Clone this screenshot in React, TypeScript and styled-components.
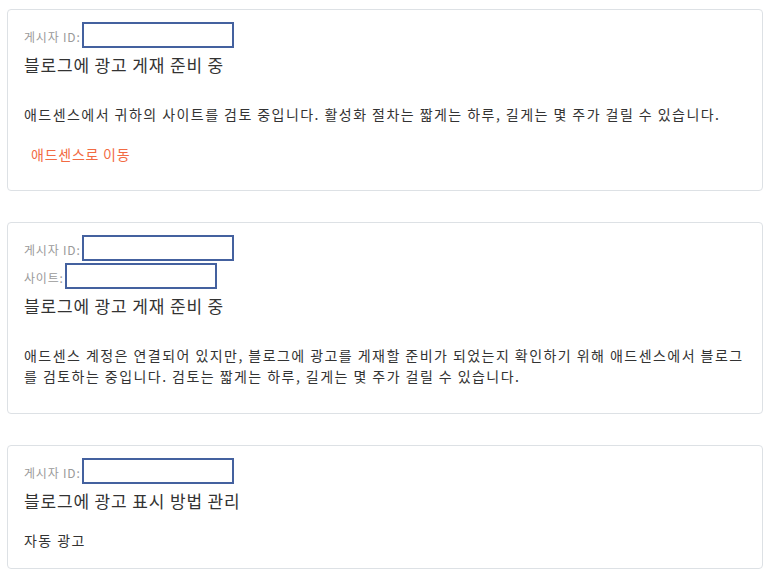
import React from 'react';
import styled, { createGlobalStyle } from 'styled-components';

const GlobalStyle = createGlobalStyle`
    body {
        margin: 0;
        background: #ffffff;
        font-family: 'Noto Sans CJK KR', 'Noto Sans', sans-serif;
        color: #333333;
    }
`;

const Page = styled.div`
    display: flex;
    flex-direction: column;
    gap: 31px;
    padding: 9px 10px 0 7px;
`;

const Card = styled.section<{ $bottom?: number }>`
    display: flex;
    flex-direction: column;
    border: 1px solid #dde1e5;
    border-radius: 4px;
    padding: 12px 16px ${props => props.$bottom ?? 26}px 16px;
`;

const Fields = styled.div`
    display: flex;
    flex-direction: column;
    gap: 2px;
`;

const FieldRow = styled.label`
    display: flex;
    align-items: center;
    height: 26px;
`;

const FieldLabel = styled.span`
    font-size: 12px;
    letter-spacing: 0.8px;
    color: #9a9a9a;
    padding-top: 3px;
`;

const FieldInput = styled.input`
    box-sizing: border-box;
    width: 152px;
    height: 26px;
    margin: 0 0 0 1px;
    border: 2px solid #44619f;
    background: #ffffff;
    outline: none;
`;

const Heading = styled.h3`
    margin: 6px 0 0;
    font-size: 17px;
    font-weight: 400;
    letter-spacing: 0.85px;
    line-height: 22px;
    color: #333333;
`;

const Text = styled.p<{ $top?: number }>`
    margin: ${props => props.$top ?? 28}px 0 0;
    font-size: 14px;
    letter-spacing: 1.45px;
    line-height: 21px;
    color: #333333;
`;

const ActionLink = styled.a`
    display: block;
    margin: 19px 0 0 7px;
    font-size: 14px;
    letter-spacing: 0.75px;
    line-height: 20px;
    color: #f26b43;
    text-decoration: none;
`;

interface FieldProps {
    label: string;
}

const Field = ({ label }: FieldProps) => (
    <FieldRow>
        <FieldLabel>{label}</FieldLabel>
        <FieldInput type="text" />
    </FieldRow>
);

const App = () => (
    <>
        <GlobalStyle />
        <Page>
            <Card>
                <Fields>
                    <Field label="게시자 ID:" />
                </Fields>
                <Heading>블로그에 광고 게재 준비 중</Heading>
                <Text>
                    애드센스에서 귀하의 사이트를 검토 중입니다. 활성화 절차는 짧게는 하루, 길게는 몇 주가 걸릴 수 있습니다.
                </Text>
                <ActionLink href="#">애드센스로 이동</ActionLink>
            </Card>

            <Card>
                <Fields>
                    <Field label="게시자 ID:" />
                    <Field label="사이트:" />
                </Fields>
                <Heading>블로그에 광고 게재 준비 중</Heading>
                <Text>
                    애드센스 계정은 연결되어 있지만, 블로그에 광고를 게재할 준비가 되었는지 확인하기 위해 애드센스에서 블로그를 검토하는 중입니다. 검토는 짧게는 하루, 길게는 몇 주가 걸릴 수 있습니다.
                </Text>
            </Card>

            <Card $bottom={17}>
                <Fields>
                    <Field label="게시자 ID:" />
                </Fields>
                <Heading>블로그에 광고 표시 방법 관리</Heading>
                <Text $top={18}>자동 광고</Text>
            </Card>
        </Page>
    </>
);

export default App;
